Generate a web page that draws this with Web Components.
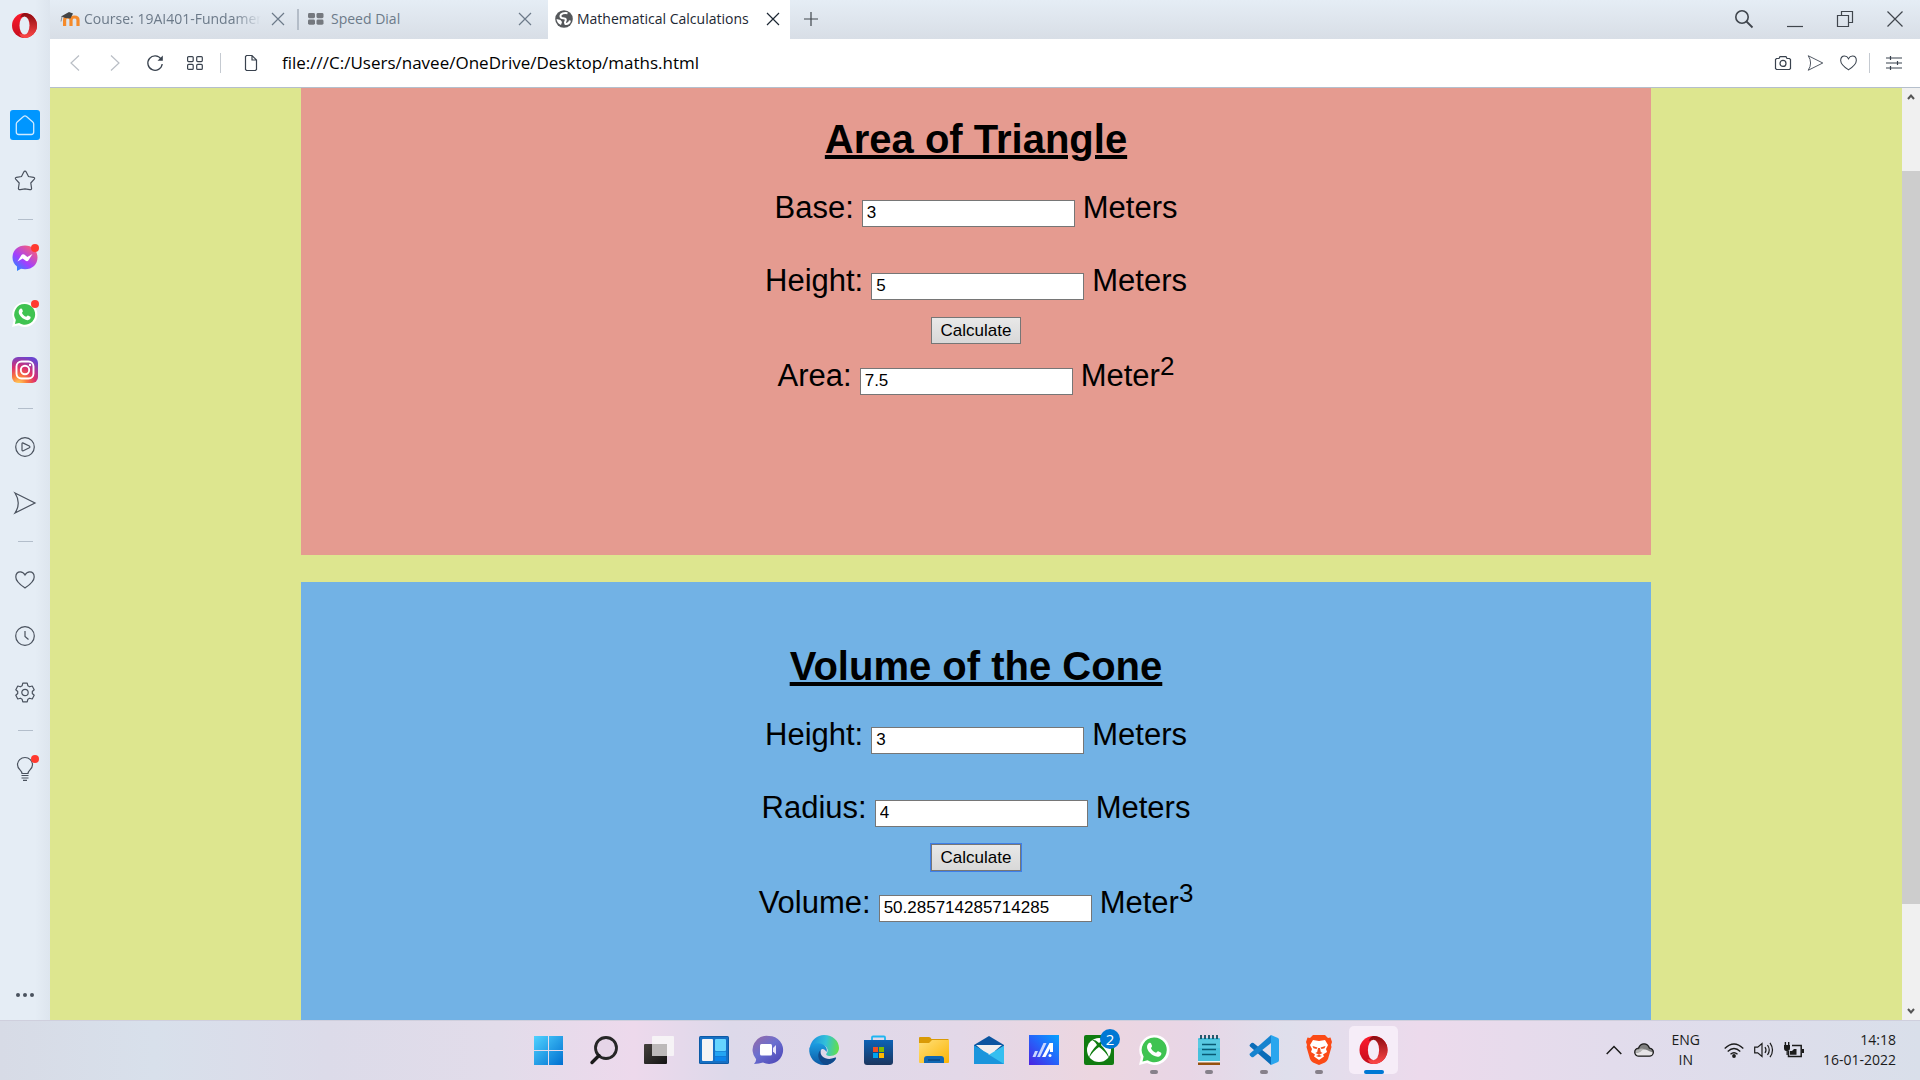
<!DOCTYPE html>
<html lang="en">
<head>
<meta charset="utf-8">
<title>Mathematical Calculations</title>
<style>
html, body { height: 100%; margin: 0; }
body { overflow: hidden; font-family: "Open Sans", "Noto Sans", sans-serif; color: #000; }
</style>
</head>
<body>
<desktop-screen></desktop-screen>
<script>
const icons = {
  opera: ['0 0 28 28', `<defs><linearGradient id="a" x1="0" y1="0" x2="0" y2="1"><stop offset="0" stop-color="#ff1b2d"/><stop offset="1" stop-color="#c30d1d"/></linearGradient><linearGradient id="b" x1="0" y1="0" x2="0" y2="1"><stop offset="0" stop-color="#8a0a10"/><stop offset="1" stop-color="#ff4848"/></linearGradient></defs><ellipse cx="14" cy="14" rx="14" ry="14" fill="url(#a)"/><path d="M14 0a14 14 0 0 1 0 28c-3-.3-5-2-6-5 8 2 12-2 12-9S16 3 9 5C10 2 12 .3 14 0z" fill="url(#b)"/><ellipse cx="14" cy="14" rx="5.600" ry="10.200" fill="var(--hole,#f5ecf8)"/>`],
  moodle: ['0 0 20 16', `<path d="M4.600 15V9q0-3 3.200-3T11 9v6M11 15V9q0-3 3.500-3T18 9v6" fill="none" stroke="#f58a2a" stroke-width="3.200"/><path d="M1 5.500 9 1l4 1.600-2.500 4.900-5-.5z" fill="#444"/><path d="M2 5.500 1 10.500" stroke="#777" stroke-width=".8"/>`],
  dial: ['0 0 16 12', `<g fill="#75797f"><rect width="7" height="5.200" rx="1.400"/><rect x="8.500" width="7" height="5.200" rx="1.400"/><rect y="6.500" width="7" height="5.200" rx="1.400"/><rect x="8.500" y="6.500" width="7" height="5.200" rx="1.400"/></g>`],
  globe: ['0 0 18 18', `<circle cx="9" cy="9" r="8.800" fill="#55585b"/><path d="M12.500 3.200q-4.500-.7-6.500 1.300-1.500 2.500 1 3.500l3 .6q1.500 1 .3 2.700-.8 1.500.2 2.700 3.500.5 4.500-3.500" fill="none" stroke="#fff" stroke-width="2"/><path d="M1.500 9l4 1 1.500 2-1 3Q2 13.500 1.500 9z" fill="#fff"/>`],
  x: ['0 0 14 14', `<path d="M1 1l12 12M13 1L1 13" class="s"/>`],
  plus: ['0 0 14 14', `<path d="M7 0v14M0 7h14" class="s"/>`],
  search: ['0 0 18 18', `<circle cx="7" cy="7" r="6.200" class="s" stroke-width="1.600"/><path d="M11.500 11.500l6 6" class="s" stroke-width="1.800"/>`],
  min: ['0 0 16 16', `<path d="M0 15.500h16" class="s"/>`],
  restore: ['0 0 16 16', `<path d="M.5 4.500h11v11H.5zM4.500 4V.5h11v11H12" class="s"/>`],
  close: ['0 0 16 16', `<path d="M.5 .5l15 15M15.500 .5l-15 15" class="s"/>`],
  back: ['0 0 10 16', `<path d="M9 .5L1 8l8 7.500" class="s"/>`],
  fwd: ['0 0 10 16', `<path d="M1 .5L9 8l-8 7.500" class="s"/>`],
  reload: ['0 0 16 16', `<path d="M14 4A7.200 7.200 0 1 0 15.200 9" class="s" stroke-width="1.300"/><path d="M15.800 .5v5.300h-5.300z" fill="currentColor"/>`],
  grid: ['0 0 16 14', `<g class="s"><rect x=".6" y=".6" width="5.600" height="5" rx="1"/><rect x="9.700" y=".6" width="5.600" height="5" rx="1"/><rect x=".6" y="8.400" width="5.600" height="5" rx="1"/><rect x="9.700" y="8.400" width="5.600" height="5" rx="1"/></g>`],
  file: ['0 0 12 16', `<path d="M1.500 .5H7L11.500 5v9.500l-1 1h-9l-1-1v-13zM7 .5V5h4.500" class="s"/>`],
  camera: ['0 0 16 14', `<path d="M1.500 2.500H4L5 .6h6l1 1.900h2.500l1 1v9l-1 1h-13l-1-1v-9z" class="s"/><circle cx="8" cy="7.400" r="3" class="s"/>`],
  send: ['0 0 22 22', `<path d="M1 1l20 10L1 21q6.500-10 0-20z" class="s"/>`],
  heart: ['0 0 20 18', `<path d="M10 17C7 15 .8 11 .8 6c0-3.500 2.200-5.200 4.500-5.200C8 .8 9 2 10 4c1-2 2-3.200 4.700-3.200 2.300 0 4.500 1.700 4.500 5.200 0 5-6.200 9-9.200 11z" class="s"/>`],
  sliders: ['0 0 16 14', `<path d="M0 2h16M0 7h16M0 12h16M4.500 0v4M11.500 5v4M4.500 10v4" class="s"/>`],
  home: ['0 0 30 30', `<rect width="30" height="30" rx="3" fill="#0096ff"/><path d="M13.500 6.500q1.500-1.200 3 0l6 5.200q1.200 1 1.200 2.300v8q0 2.500-2.500 2.500H8.800q-2.500 0-2.500-2.500v-8q0-1.300 1.200-2.300z" fill="none" stroke="#cfeaff" stroke-width="1.300"/>`],
  star: ['0 0 22 22', `<path d="M11 1.200q.8 0 1.200.8l2.300 4.500 5 .8q1.800.6.800 1.900L16.800 13l.8 5.400q-.2 1.700-1.900 1.200L11 18.800l-4.700.8q-1.700.5-1.900-1.200L5.200 13 1.700 9.200Q.7 7.900 2.500 7.300l5-.8L9.800 2q.4-.8 1.200-.8z" class="s"/>`],
  messenger: ['0 0 26 26', `<defs><linearGradient id="a" x1="0" y1="1" x2=".8" y2="0"><stop offset="0" stop-color="#0a9bff"/><stop offset=".45" stop-color="#a040ff"/><stop offset="1" stop-color="#ff6070"/></linearGradient></defs><path d="M13 .5C5.500 .5.500 5.800.500 12.500c0 3.800 1.700 6.800 4.500 9V26l4-2.200c1.300.3 2.600.5 4 .5 7.500 0 12.500-5 12.500-11.800S20.500 .5 13 .5z" fill="url(#a)"/><path d="M5.500 16.500 9.500 10q1.200-1.500 2.800-.4l3 2.300 5.200-2.900-4 6.300q-1.200 1.600-2.800.5l-3-2.200z" fill="#fff"/>`],
  whatsapp: ['0 0 30 30', `<path d="M15 0A15 15 0 0 0 2 22L0 30l8-2A15 15 0 1 0 15 0z" fill="#fff"/><path d="M15 2.500a12.400 12.400 0 0 0-10.400 19L3.500 26.500l5-1.300A12.400 12.400 0 1 0 15 2.500z" fill="#3fc351"/><path d="M8 12c0-2.500 2-4.500 3-4.200 1 0 1.300 1 2 3 .4 1-1 1.800-1 2.400 1 2.200 2.700 3.800 5 4.600.7 0 1.300-1.800 2.200-1.500l3 1.500c.8 2-1.400 4.200-3.700 4C13 21 8 16 8 12z" fill="#fff"/>`],
  insta: ['0 0 26 26', `<defs><radialGradient id="a" cx=".25" cy="1.050" r="1.100"><stop offset="0" stop-color="#ffd85e"/><stop offset=".3" stop-color="#fb7a3c"/><stop offset=".6" stop-color="#dc2f6e"/><stop offset="1" stop-color="#6b45cf"/></radialGradient></defs><rect width="26" height="26" rx="6" fill="url(#a)"/><g fill="none" stroke="#fff" stroke-width="1.900"><rect x="4.500" y="4.500" width="17" height="17" rx="5"/><circle cx="13" cy="13" r="4.200"/></g><circle cx="18" cy="8" r="1.200" fill="#fff"/>`],
  play: ['0 0 20 20', `<circle cx="10" cy="10" r="9.300" class="s"/><path d="M7 7q0-1.500 1.300-.9l6 2.900q1.200.9 0 1.800l-6 2.900Q7 14.300 7 13z" class="s"/>`],
  clock: ['0 0 20 20', `<circle cx="10" cy="10" r="9.300" class="s"/><path d="M10 5v5.500l3.500 3" class="s"/>`],
  gear: ['0 0 20 20', `<path d="M7.800 1.200h4.400l.7 2.600 1.700 1 2.600-.8 2 3.700-1.900 1.800v2l1.900 1.800-2 3.700-2.600-.8-1.700 1-.7 2.600H7.800l-.7-2.600-1.700-1-2.600.8-2-3.700 1.900-1.800v-2L.8 7.700l2-3.700 2.600.8 1.700-1z" class="s" stroke-linejoin="round"/><circle cx="10" cy="10.500" r="3.200" class="s"/>`],
  bulb: ['0 0 18 24', `<path d="M6 16.500C6 13 1.500 12.500 1.500 7.800a7.500 7.300 0 0 1 15 0C16.500 12.500 12 13 12 16.500zM5.500 18.500h7M5.500 21h7M7 23.300h4" class="s"/>`],
  dots: ['0 0 18 4', `<g fill="currentColor"><circle cx="2" cy="2" r="2"/><circle cx="9" cy="2" r="2"/><circle cx="16" cy="2" r="2"/></g>`],
  start: ['0 0 29 29', `<defs><linearGradient id="a" gradientUnits="userSpaceOnUse" x1="0" y1="0" x2="29" y2="29"><stop offset="0" stop-color="#4fd2ff"/><stop offset="1" stop-color="#006fd0"/></linearGradient></defs><path d="M0 0h14v14H0zM15 0h14v14H15zM0 15h14v14H0zM15 15h14v14H15z" fill="url(#a)"/>`],
  tsearch: ['0 0 28 28', `<circle cx="16" cy="12" r="10.500" fill="#e6d5e8" stroke="#262626" stroke-width="2.800"/><path d="M9 19.500 2 26.500" stroke="#1a1a1a" stroke-width="3.400" stroke-linecap="round"/>`],
  tasks: ['0 0 30 28', `<defs><linearGradient id="a" x2="1" y2="1"><stop stop-color="#45413d"/><stop offset="1" stop-color="#141414"/></linearGradient></defs><rect y="8" width="23" height="20" rx="1" fill="url(#a)"/><rect x="8" y="0" width="22" height="20" rx="1" fill="#f7f5f7" opacity=".9"/><path d="M8 8h15v12H8z" fill="#bcb9b9"/>`],
  widgets: ['0 0 30 28', `<rect width="30" height="28" rx="1.500" fill="#0c5aa6"/><rect x="1" y="1" width="28" height="26" fill="#1670c4"/><rect x="3" y="3" width="11" height="22" rx="1" fill="#f4f4f4"/><rect x="16" y="3" width="11" height="12" rx="1" fill="#66d5ff"/><rect x="16" y="15.500" width="11" height="4.500" fill="#23a5f3"/><rect x="16" y="20.500" width="11" height="4.500" fill="#0b84ea"/>`],
  chat: ['0 0 29 28', `<defs><linearGradient id="a" x2=".8" y2="1"><stop stop-color="#9a6aa4"/><stop offset=".5" stop-color="#6a6fd0"/><stop offset="1" stop-color="#4f49b8"/></linearGradient></defs><path d="M15 0a14 14 0 1 1-6 26.600q-4 1.400-9 1.400 2.500-3 2-5A14 14 0 0 1 15 0z" fill="url(#a)"/><rect x="6" y="8" width="12" height="11.500" rx="1.500" fill="#fff"/><path d="M19 12l3-3v9.500l-3-3z" fill="#e9e6fa"/>`],
  edge: ['0 0 30 30', `<defs><linearGradient id="a" x1="0" y1=".3" x2="1" y2=".4"><stop stop-color="#1a8fe0"/><stop offset=".55" stop-color="#33c1d9"/><stop offset="1" stop-color="#62df4c"/></linearGradient><linearGradient id="b" x2="0" y2="1"><stop stop-color="#1b9de2"/><stop offset="1" stop-color="#0c59a4"/></linearGradient></defs><path d="M1 12A14.500 14.500 0 0 1 15 0c9 0 15 6 15 13 0 5-4 8-9 8-3 0-4.500-1.200-3.500-2.500 3-3.500 0-8.500-5-8.500-4 0-8 .5-11.500 2z" fill="url(#a)"/><path d="M.3 13C2 9 7 7.500 11 8.500c5 .8 8 5 6.500 8.500-2-3.500-5-4-6-1-2 8 6 12 15.500 8A15 15 0 0 1 15 30C6 30-.8 22 .3 13z" fill="url(#b)"/><path d="M11.500 15c-5 5-1 13 5 15 4 0 8-2.500 10.500-6.500.5-1-.5-1.200-1.500-.7C18 26 10.500 22 11.500 15z" fill="#114a8b"/>`],
  store: ['0 0 29 29', `<defs><linearGradient id="a" x2="0" y2="1"><stop stop-color="#0c62b5"/><stop offset="1" stop-color="#1b365f"/></linearGradient></defs><path d="M8 5V1.500q0-1 1-1h11q1 0 1 1V5" fill="none" stroke="#1fb5f1" stroke-width="1.800"/><path d="M0 4h29v22q0 3-3 3H3q-3 0-3-3z" fill="url(#a)"/><path d="M9 11h5v5H9z" fill="#f25022"/><path d="M15 11h5v5h-5z" fill="#7fba00"/><path d="M9 17h5v5H9z" fill="#00a4ef"/><path d="M15 17h5v5h-5z" fill="#ffb900"/>`],
  folder: ['0 0 30 28', `<defs><linearGradient id="a" x2="1" y2="1"><stop stop-color="#ffe07a"/><stop offset="1" stop-color="#fbb404"/></linearGradient></defs><path d="M0 2q0-1 1-1h9q1.500 0 2.500 2h17V12H0z" fill="#d99a06"/><path d="M0 7h10l3-3h17v22q0 1-1 1H1q-1 0-1-1z" fill="url(#a)"/><path d="M5 27v-4q0-3 3-3h14q3 0 3 3v4z" fill="#1067b3"/><path d="M9 24h12" stroke="#083f74" stroke-width="1.200"/>`],
  mail: ['0 0 30 28', `<path d="M0 9 15 0l15 9v6H0z" fill="#0b55a0"/><path d="M2 9h26L15 20z" fill="#f1efef"/><path d="M0 9.500 15 18l-15 10z" fill="#29a6e4"/><path d="M30 9.500V28H0z" fill="#35bff0"/><path d="M0 9.500 30 28H0z" fill="#1a95dc"/>`],
  asus: ['0 0 30 30', `<defs><linearGradient id="a" x1="0" y1="1" x2="1" y2="0"><stop stop-color="#4c22e0"/><stop offset=".5" stop-color="#2563fa"/><stop offset="1" stop-color="#05a3ff"/></linearGradient></defs><path d="M0 0h30v30H0z" fill="url(#a)"/><path d="M3.500 22 6 16h3l-2.500 6zM8 22l6.500-14h3L11 22z" fill="#c9d6ff"/><path d="M13 22 20.500 8H24v9h-3v-3.500L16.500 22z" fill="#fff"/><circle cx="21" cy="20.500" r="1.500" fill="#fff"/>`],
  xbox: ['0 0 30 30', `<rect width="30" height="30" rx="2" fill="#107c10"/><circle cx="15" cy="15" r="12" fill="#fff"/><path d="M7 5q4-1 8 3 4-4 8-3-3 0-6 5 7 7 8 13-4-7-10-11Q9 16 5 23q1-6 8-13-3-5-6-5z" fill="#107c10"/>`],
  notepad: ['0 0 22 30', `<rect y="3" width="22" height="24" rx="1" fill="#47c0dc"/><path d="M0 5h22v8H0z" fill="#6bd3e8" opacity=".5"/><path d="M4 9.500h14M4 14.500h14M4 19.500h14" stroke="#095a73" stroke-width="1.600"/><path d="M0 26h22v1.500H0z" fill="#f4f4f4"/><path d="M0 27.500h22V30H0z" fill="#96500f"/><path d="M3 0v4M7 0v4M11 0v4M15 0v4M19 0v4" stroke="#124d60" stroke-width="1.800"/>`],
  vscode: ['0 0 30 30', `<path d="M22 0v30L1 11.500q-1-1 0-2l1.500-1.400q1-.7 2 0L22 22z" fill="#0a6cb8"/><path d="M22 0 1 18.500q-1 1 0 2l1.500 1.400q1 .7 2 0L22 8z" fill="#1683cf"/><path d="M22 0l7 3q1 .5 1 2v20q0 1.500-1 2l-7 3z" fill="#2aa6ee"/>`],
  brave: ['0 0 26 30', `<path d="M7 0h12l3 3 2.500-.5L26 7l-1 3 .5 2-3.500 12q-1 2-3 3.500L13 30l-6-2.500q-2-1.500-3-3.500L.5 12 1 10 0 7l1.500-4.500L4 3z" fill="#fb4a16"/><path d="M7 5l6 1 6-1 3 5-2 4 1 3-4 2.500 1 2-5 3.500-5-3.500 1-2L5 17l1-3-2-4z" fill="#fff"/><path d="M6.500 11l5 1.500-1 1.500-3-.8zM19.500 11l-5 1.500 1 1.500 3-.8zM12 13h2l.8 4 1.800 1-3.600 1.700L9.400 18l1.800-1zM10 21l3-1.200 3 1.200-3 1z" fill="#f4501e"/>`],
  up: ['0 0 16 10', `<path d="M.7 9 8 1.500 15.300 9" class="s" stroke-width="1.500"/>`],
  cloud: ['0 0 20 14', `<path d="M5 13.200a4 4 0 0 1-.5-8Q6 .8 10 .8t5.500 4.400a4 4 0 0 1-.3 8z" fill="#7f7f7f"/><path d="M1 10q0-3.500 4-3.500 1-1 3-1 2 0 3.500 2z" fill="#b5b5b5"/><path d="M1 10q2 0 5-1 4-3.500 7-2 3 1.500 6 2.500 0 3.700-3.500 3.700H5q-3.500 0-4-3.200z" fill="#e6e4e6"/><path d="M5 13.200a4 4 0 0 1-.5-8Q6 .8 10 .8t5.500 4.400a4 4 0 0 1-.3 8z" class="s" stroke-width="1.300"/>`],
  wifi: ['0 0 20 15', `<path d="M.7 5.500q9.300-9 18.600 0M3.700 8.500q6.300-6 12.600 0M6.500 11.300q3.500-3.200 7 0" class="s" stroke-width="1.300"/><circle cx="10" cy="13" r="1.900" fill="currentColor"/>`],
  sound: ['0 0 20 16', `<path d="M.7 5.200h3L8 1.500v13l-4.300-3.700h-3zM11 5q2 3 0 6M13.500 3q3.500 5 0 10M16 .8q5 7.200 0 14.400" class="s"/>`],
  battery: ['0 0 20 16', `<path d="M8 3.500h9.200v11H4.500V9" class="s" stroke-width="1.500"/><path d="M18 7h2v4h-2zM6 12.800V9h2l2-2h2.500v5.800zM0 3h6v3q0 3-2.300 3H2.300Q0 9 0 6zM.7 0h1.400v3H.7zM4 0h1.400v3H4zM2.500 9h1.300v4H2.500z" fill="currentColor"/>`],
  sup: ['0 0 8 6', `<path d="M1 5l3-3.500L7 5" fill="none" stroke="#555" stroke-width="2"/>`],
  sdown: ['0 0 8 6', `<path d="M1 1l3 3.500L7 1" fill="none" stroke="#555" stroke-width="2"/>`]
};

function define(name, render) {
  customElements.define(name, class extends HTMLElement {
    connectedCallback() {
      if (this.shadowRoot) return;
      const t = document.createElement('template');
      t.innerHTML = render(this);
      this.attachShadow({ mode: 'open' }).append(t.content.cloneNode(true));
    }
  });
}
const reset = `*{box-sizing:border-box}button{border:0;background:none;padding:0;margin:0;color:inherit;font:inherit;display:flex;align-items:center;justify-content:center}`;

// <ui-icon name size="width height">
define('ui-icon', el => {
  const [box, body] = icons[el.getAttribute('name')];
  const [w, h] = (el.getAttribute('size') || box.split(' ').slice(2).join(' ')).split(' ');
  return `<style>:host{display:block;flex:none}svg{display:block;overflow:visible}.s{fill:none;stroke:currentColor}</style>
  <svg width="${w}" height="${h}" viewBox="${box}" stroke-width="1.200" aria-hidden="true">${body}</svg>`;
});

define('browser-tab', el => `
  <style>${reset}
  :host{display:flex;align-items:center;height:39px;color:#6c7a89;font-size:14px;line-height:20px;padding:0 16px 2px 9px;width:249px;box-sizing:border-box}
  :host([active]){background:#fff;color:#1c2733;width:242px;padding:0 10px 2px 7px}
  :host([first]){width:247px;padding:0 12px 2px 10px}
  .tab{flex:1;min-width:0;justify-content:flex-start;gap:var(--gap,4px)}
  .t{overflow:hidden;white-space:nowrap;flex:1;text-align:left}
  :host([first]) .t{-webkit-mask-image:linear-gradient(90deg,#000 85%,transparent)}
  .c{margin-left:10px}
  </style>
  <button class="tab" role="tab"><slot name="icon"></slot><span class="t"><slot></slot></span></button>
  <button class="c" aria-label="Close tab"><ui-icon name="x"></ui-icon></button>`);

define('tab-strip', () => `
  <style>${reset}
  :host{display:flex;height:39px;background:linear-gradient(#e5edf5,#d8dee6);color:#40464d}
  .sep{width:2px;height:21px;margin-top:9px;background:#b4bdc8}
  .dial{--gap:7px}
  .new{width:42px;height:37px}
  .spacer{flex:1}
  .win{display:flex;height:37px;gap:34px;padding-right:17px}
  </style>
  <browser-tab first><ui-icon slot="icon" name="moodle"></ui-icon>Course: 19AI401-Fundamentals</browser-tab>
  <div class="sep"></div>
  <browser-tab class="dial"><ui-icon slot="icon" name="dial"></ui-icon>Speed Dial</browser-tab>
  <browser-tab active><ui-icon slot="icon" name="globe"></ui-icon>Mathematical Calculations</browser-tab>
  <button class="new" aria-label="New tab"><ui-icon name="plus"></ui-icon></button>
  <div class="spacer"></div>
  <div class="win">
    <button aria-label="Search tabs"><ui-icon name="search"></ui-icon></button>
    <button aria-label="Minimize"><ui-icon name="min"></ui-icon></button>
    <button aria-label="Restore"><ui-icon name="restore"></ui-icon></button>
    <button aria-label="Close"><ui-icon name="close"></ui-icon></button>
  </div>`);

define('address-bar', () => `
  <style>${reset}
  :host{display:flex;align-items:center;height:49px;background:#fff;border-bottom:1px solid #b5bfcc;padding:0 18px 0 20px;color:#39424e;box-sizing:border-box}
  .off{color:#b9bec5;margin-right:30px}
  .off+.off{margin-right:27px}
  .r{margin-right:24px}
  i{width:1px;height:20px;background:#c5cad1}
  .l{margin:0 24px 0 17px}
  .m{margin:0 16px 0 12px}
  input{flex:1;min-width:0;border:0;padding:0;margin:0 0 0 25px;font:17px/24px "Open Sans",sans-serif;color:#000;background:none;outline:0}
  .right{display:flex;align-items:center;gap:16px}
  </style>
  <button class="off" aria-label="Back"><ui-icon name="back"></ui-icon></button>
  <button class="off" aria-label="Forward"><ui-icon name="fwd"></ui-icon></button>
  <button class="r" aria-label="Reload"><ui-icon name="reload"></ui-icon></button>
  <button aria-label="Speed Dial"><ui-icon name="grid"></ui-icon></button><i class="l"></i>
  <ui-icon name="file"></ui-icon>
  <input type="text" aria-label="Address" value="file:///C:/Users/navee/OneDrive/Desktop/maths.html">
  <div class="right">
    <button aria-label="Snapshot"><ui-icon name="camera"></ui-icon></button>
    <button aria-label="Send"><ui-icon name="send" size="17 16"></ui-icon></button>
    <button aria-label="Bookmark"><ui-icon name="heart" size="17 16"></ui-icon></button>
  </div>
  <i class="m"></i>
  <button aria-label="Easy setup"><ui-icon name="sliders"></ui-icon></button>`);

define('side-bar', () => {
  const b = (n, label, size, badge) => `<button aria-label="${label}"><ui-icon name="${n}"${size ? ` size="${size}"` : ''}></ui-icon>${badge ? '<b></b>' : ''}</button>`;
  return `<style>${reset}
  :host{display:flex;flex-direction:column;width:50px;background:linear-gradient(90deg,#e5edf5 70%,#dde5ee);color:#4a525e;--hole:#e5edf5}
  .o{height:50px;margin-bottom:47px}
  button{height:56px;width:49px;position:relative;flex:none}
  hr{width:15px;height:1px;margin:10px 17px 10px 18px;border:0;background:#b3becb}
  b{position:absolute;left:31px;top:14px;width:8px;height:8px;border-radius:4px;background:#ff3a2f}
  .m{margin-top:auto;height:50px}
  </style>
  <button class="o" aria-label="Opera menu"><ui-icon name="opera" size="25 25"></ui-icon></button>
  ${b('home', 'Speed Dial')}${b('star', 'Pinboards')}<hr>
  ${b('messenger', 'Messenger', '', 1)}${b('whatsapp', 'WhatsApp', '25 25', 1)}${b('insta', 'Instagram')}<hr>
  ${b('play', 'Player')}${b('send', 'My Flow')}<hr>
  ${b('heart', 'Bookmarks')}${b('clock', 'History')}${b('gear', 'Settings')}<hr>
  ${b('bulb', 'Tips', '', 1)}
  <button class="m" aria-label="More"><ui-icon name="dots"></ui-icon></button>`;
});

define('calc-field', el => `
  <style>
  :host{display:flex;justify-content:center;align-items:baseline;gap:8px;height:37px;font-size:31px;line-height:37px;white-space:nowrap}
  input{box-sizing:border-box;width:213px;height:27px;border:1px solid #767676;border-radius:0;padding:0 4px;margin:0;background:#fff;font:17px/25px "Liberation Sans",Arial,sans-serif;color:#000}
  sup{font-size:26px;line-height:0}
  </style>
  <label for="v">${el.getAttribute('label')}:</label>
  <input id="v" type="text" value="${el.getAttribute('value')}">
  <span><slot></slot>${el.hasAttribute('power') ? `<sup>${el.getAttribute('power')}</sup>` : ''}</span>`);

define('calc-panel', el => `
  <style>
  :host{display:flex;flex-direction:column;box-sizing:border-box;width:100%;max-width:1350px;min-height:500px;padding-top:61px;background:var(--panel)}
  h1{margin:0 0 27px;font-size:40px;line-height:46px;text-align:center;text-decoration:underline}
  .in{display:flex;flex-direction:column;gap:36px}
  button{align-self:center;width:90px;height:27px;margin:18px 0 13px;padding:0;border:1px solid #767676;border-radius:0;background:linear-gradient(#e8e8e8,#d8d8d8);font:17px/20px "Liberation Sans",Arial,sans-serif;color:#000}
  :host([focused]) button{outline:1px solid #3f7fe8}
  </style>
  <h1>${el.getAttribute('heading')}</h1>
  <div class="in"><slot></slot></div>
  <button type="button">Calculate</button>
  <slot name="result"></slot>`);

define('maths-page', () => `
  <style>
  :host{display:flex;min-width:0;min-height:0;background:#dde68f;font-family:"Liberation Sans",Arial,sans-serif;overflow:hidden}
  main{flex:1;display:flex;flex-direction:column;align-items:center;gap:27px;overflow:hidden}
  calc-panel{flex:none}
  .tri{--panel:#e59b90;margin-top:-33px}
  .cone{--panel:#72b2e5}
  .bar{width:18px;display:flex;flex-direction:column;background:#f0f0f0}
  .bar ui-icon{padding:6px 5px}
  .a{flex:65}.t{flex:733;background:#cdcdcd}.z{flex:98}
  </style>
  <main>
    <calc-panel class="tri" heading="Area of Triangle">
      <calc-field label="Base" value="3">Meters</calc-field>
      <calc-field label="Height" value="5">Meters</calc-field>
      <calc-field slot="result" label="Area" value="7.5" power="2">Meter</calc-field>
    </calc-panel>
    <calc-panel class="cone" heading="Volume of the Cone" focused>
      <calc-field label="Height" value="3">Meters</calc-field>
      <calc-field label="Radius" value="4">Meters</calc-field>
      <calc-field slot="result" label="Volume" value="50.285714285714285" power="3">Meter</calc-field>
    </calc-panel>
  </main>
  <div class="bar"><ui-icon name="sup"></ui-icon><div class="a"></div><div class="t"></div><div class="z"></div><ui-icon name="sdown"></ui-icon></div>`);

define('task-bar', () => {
  const apps = [['start', 'Start'], ['tsearch', 'Search'], ['tasks', 'Task view'], ['widgets', 'Widgets'], ['chat', 'Chat'], ['edge', 'Edge'], ['store', 'Store'], ['folder', 'File Explorer'], ['mail', 'Mail'], ['asus', 'MyASUS'], ['xbox', 'Xbox', 'n'], ['whatsapp', 'WhatsApp', 'run'], ['notepad', 'Notepad', 'run'], ['vscode', 'Visual Studio Code', 'run'], ['brave', 'Brave', 'run'], ['opera', 'Opera', 'active']];
  return `<style>${reset}
  :host{display:grid;grid-template-columns:1fr auto 1fr;height:60px;box-sizing:border-box;border-top:1px solid #cfcfdd;padding:0 0 1px 2px;color:#1b1b1b;font-size:14px;line-height:20px;
    background:linear-gradient(90deg,#d7dbe6 0,#d8e0eb 8%,#dcdbe9 17%,#e2dcea 26%,#edd9ec 33%,#ddd9ea 38%,#e3d8e8 50%,#ecd6e0 57%,#e8d6e6 62%,#dfdfec 67%,#ecdaec 74%,#e2dcec 84%,#d9dfea 100%)}
  .apps{grid-column:2;display:flex;align-items:center}
  .apps button{width:49px;height:48px;margin:0 3px;position:relative;border-radius:5px}
  .active{background:#f6edf8}
  .run::after,.active::after{content:"";position:absolute;bottom:0;left:50%;width:8px;margin-left:-4px;height:4px;border-radius:2px;background:#86808a}
  .active::after{width:20px;margin-left:-10px;background:#0078d4}
  .n span{position:absolute;left:26px;top:3px;width:20px;height:20px;border-radius:50%;background:#0078d4;color:#fff;font-size:15px;text-align:center}
  .tray{display:flex;align-items:center;justify-content:flex-end;padding-right:24px}
  .lang{margin:0 24px 0 18px;text-align:center;display:block}
  .net{gap:10px;margin-right:20px}
  .up{margin-right:12px}
  .time{width:72px;text-align:right;white-space:nowrap;display:flex;flex-direction:column;align-items:flex-end}
  </style>
  <div class="apps">${apps.map(([n, l, c]) => `<button class="${c || ''}" aria-label="${l}"><ui-icon name="${n}"${n === 'opera' ? ' size="29 28"' : ''}></ui-icon>${c === 'n' ? '<span>2</span>' : ''}</button>`).join('')}</div>
  <div class="tray">
    <button class="up" aria-label="Hidden icons"><ui-icon name="up"></ui-icon></button>
    <ui-icon name="cloud"></ui-icon>
    <button class="lang">ENG<br>IN</button>
    <button class="net" aria-label="Quick settings"><ui-icon name="wifi"></ui-icon><ui-icon name="sound"></ui-icon><ui-icon name="battery"></ui-icon></button>
    <button class="time"><span>14:18</span><span>16-01-2022</span></button>
  </div>`;
});

define('desktop-screen', () => `
  <style>
  :host{display:flex;flex-direction:column;height:100vh}
  .w{flex:1;display:flex;min-height:0}
  .c{flex:1;min-width:0;display:flex;flex-direction:column}
  maths-page{flex:1}
  </style>
  <div class="w"><side-bar></side-bar><div class="c"><tab-strip></tab-strip><address-bar></address-bar><maths-page></maths-page></div></div>
  <task-bar></task-bar>`);
</script>
</body>
</html>
